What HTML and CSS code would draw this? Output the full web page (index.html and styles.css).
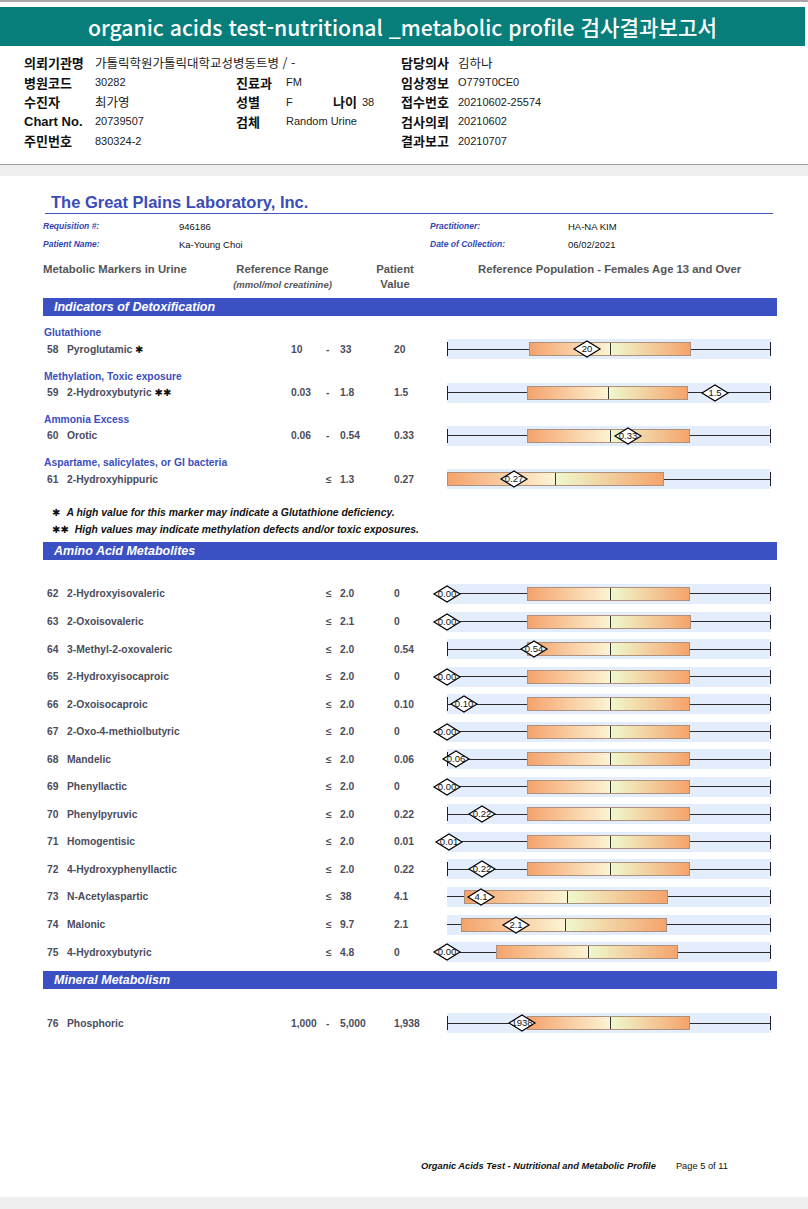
FILE: index.html
```html
<!DOCTYPE html>
<html lang="ko">
<head>
<meta charset="utf-8">
<title>organic acids test</title>
<link rel="stylesheet" href="styles.css">
</head>
<body>
<div class="top">
  <div class="hdr">organic acids test-nutritional _metabolic profile 검사결과보고서</div>
  <div class="info">
    <span class="lb">의뢰기관명</span><span class="vl k s5">가톨릭학원가톨릭대학교성병동트병 / -</span><span class="lb">담당의사</span><span class="vl k">김하나</span>
    <span class="lb">병원코드</span><span class="vl">30282</span><span class="lb">진료과</span><span class="vl s3">FM</span><span class="lb">임상정보</span><span class="vl">O779T0CE0</span>
    <span class="lb">수진자</span><span class="vl k">최가영</span><span class="lb">성별</span><span class="vl">F</span><span class="lb">나이</span><span class="vl">38</span><span class="lb">접수번호</span><span class="vl">20210602-25574</span>
    <span class="lb lat">Chart No.</span><span class="vl">20739507</span><span class="lb">검체</span><span class="vl s3">Random Urine</span><span class="lb">검사의뢰</span><span class="vl">20210602</span>
    <span class="lb">주민번호</span><span class="vl s5">830324-2</span><span class="lb">결과보고</span><span class="vl">20210707</span>
  </div>
</div>
<div class="band"></div>
<div class="page">
  <div class="title">The Great Plains Laboratory, Inc.</div>
  <div class="rule"></div>
  <div class="meta">
    <span class="ml">Requisition #:</span><span class="mv">946186</span><span class="ml">Practitioner:</span><span class="mv">HA-NA KIM</span>
    <span class="ml">Patient Name:</span><span class="mv">Ka-Young Choi</span><span class="ml">Date of Collection:</span><span class="mv">06/02/2021</span>
  </div>
  <div class="colhead">
    <span class="c1">Metabolic Markers in Urine</span>
    <span class="c2">Reference Range<br><em>(mmol/mol creatinine)</em></span>
    <span class="c3">Patient<br>Value</span>
    <span class="c4">Reference Population - Females Age 13 and Over</span>
  </div>

  <div class="sec">Indicators of Detoxification</div>

  <div class="grp">
    <div class="gl">Glutathione</div>
    <div class="row r20"><span class="n">58</span><span class="nm">Pyroglutamic <i class="ast">✱</i></span><span class="lo">10</span><span class="ds">-</span><span class="hi">33</span><span class="v">20</span>
      <div class="ch"><i class="wh"></i><i class="tk tl"></i><i class="tk tr"></i><div class="bx" style="left:82px;width:162px"><i class="ba" style="width:80px"></i><i class="bb"></i></div><span class="dm" style="left:140px"><svg viewBox="0 0 28 18"><polygon points="1,9 14,1 27,9 14,17"/></svg><b>20</b></span></div>
    </div>
  </div>
  <div class="grp">
    <div class="gl">Methylation, Toxic exposure</div>
    <div class="row r20"><span class="n">59</span><span class="nm">2-Hydroxybutyric <i class="ast">✱✱</i></span><span class="lo">0.03</span><span class="ds">-</span><span class="hi">1.8</span><span class="v">1.5</span>
      <div class="ch"><i class="wh"></i><i class="tk tl"></i><i class="tk tr"></i><div class="bx" style="left:80px;width:161px"><i class="ba" style="width:80px"></i><i class="bb"></i></div><span class="dm" style="left:268px"><svg viewBox="0 0 28 18"><polygon points="1,9 14,1 27,9 14,17"/></svg><b>1.5</b></span></div>
    </div>
  </div>
  <div class="grp">
    <div class="gl">Ammonia Excess</div>
    <div class="row r20"><span class="n">60</span><span class="nm">Orotic</span><span class="lo">0.06</span><span class="ds">-</span><span class="hi">0.54</span><span class="v">0.33</span>
      <div class="ch"><i class="wh"></i><i class="tk tl"></i><i class="tk tr"></i><div class="bx" style="left:80px;width:163px"><i class="ba" style="width:82px"></i><i class="bb"></i></div><span class="dm" style="left:181px"><svg viewBox="0 0 28 18"><polygon points="1,9 14,1 27,9 14,17"/></svg><b>0.33</b></span></div>
    </div>
  </div>
  <div class="grp">
    <div class="gl">Aspartame, salicylates, or GI bacteria</div>
    <div class="row r20"><span class="n">61</span><span class="nm">2-Hydroxyhippuric</span><span class="lo"></span><span class="ds">≤</span><span class="hi">1.3</span><span class="v">0.27</span>
      <div class="ch"><i class="wh"></i><i class="tk tr"></i><div class="bx" style="left:0px;width:217px"><i class="ba" style="width:107px"></i><i class="bb"></i></div><span class="dm" style="left:67px"><svg viewBox="0 0 28 18"><polygon points="1,9 14,1 27,9 14,17"/></svg><b>0.27</b></span></div>
    </div>
  </div>

  <div class="notes">
    <div><i class="ast">✱</i>A high value for this marker may indicate a Glutathione deficiency.</div>
    <div><i class="ast">✱✱</i>High values may indicate methylation defects and/or toxic exposures.</div>
  </div>

  <div class="sec s2">Amino Acid Metabolites</div>

  <div class="amino">
    <div class="row"><span class="n">62</span><span class="nm">2-Hydroxyisovaleric</span><span class="lo"></span><span class="ds">≤</span><span class="hi">2.0</span><span class="v">0</span>
      <div class="ch"><i class="wh"></i><i class="tk tl"></i><i class="tk tr"></i><div class="bx" style="left:80px;width:163px"><i class="ba" style="width:82px"></i><i class="bb"></i></div><span class="dm" style="left:0px"><svg viewBox="0 0 28 18"><polygon points="1,9 14,1 27,9 14,17"/></svg><b>0.00</b></span></div>
    </div>
    <div class="row"><span class="n">63</span><span class="nm">2-Oxoisovaleric</span><span class="lo"></span><span class="ds">≤</span><span class="hi">2.1</span><span class="v">0</span>
      <div class="ch"><i class="wh"></i><i class="tk tl"></i><i class="tk tr"></i><div class="bx" style="left:80px;width:164px"><i class="ba" style="width:82px"></i><i class="bb"></i></div><span class="dm" style="left:0px"><svg viewBox="0 0 28 18"><polygon points="1,9 14,1 27,9 14,17"/></svg><b>0.00</b></span></div>
    </div>
    <div class="row"><span class="n">64</span><span class="nm">3-Methyl-2-oxovaleric</span><span class="lo"></span><span class="ds">≤</span><span class="hi">2.0</span><span class="v">0.54</span>
      <div class="ch"><i class="wh"></i><i class="tk tl"></i><i class="tk tr"></i><div class="bx" style="left:80px;width:163px"><i class="ba" style="width:82px"></i><i class="bb"></i></div><span class="dm" style="left:87px"><svg viewBox="0 0 28 18"><polygon points="1,9 14,1 27,9 14,17"/></svg><b>0.54</b></span></div>
    </div>
    <div class="row"><span class="n">65</span><span class="nm">2-Hydroxyisocaproic</span><span class="lo"></span><span class="ds">≤</span><span class="hi">2.0</span><span class="v">0</span>
      <div class="ch"><i class="wh"></i><i class="tk tl"></i><i class="tk tr"></i><div class="bx" style="left:80px;width:163px"><i class="ba" style="width:82px"></i><i class="bb"></i></div><span class="dm" style="left:0px"><svg viewBox="0 0 28 18"><polygon points="1,9 14,1 27,9 14,17"/></svg><b>0.00</b></span></div>
    </div>
    <div class="row"><span class="n">66</span><span class="nm">2-Oxoisocaproic</span><span class="lo"></span><span class="ds">≤</span><span class="hi">2.0</span><span class="v">0.10</span>
      <div class="ch"><i class="wh"></i><i class="tk tl"></i><i class="tk tr"></i><div class="bx" style="left:80px;width:163px"><i class="ba" style="width:82px"></i><i class="bb"></i></div><span class="dm" style="left:17px"><svg viewBox="0 0 28 18"><polygon points="1,9 14,1 27,9 14,17"/></svg><b>0.10</b></span></div>
    </div>
    <div class="row"><span class="n">67</span><span class="nm">2-Oxo-4-methiolbutyric</span><span class="lo"></span><span class="ds">≤</span><span class="hi">2.0</span><span class="v">0</span>
      <div class="ch"><i class="wh"></i><i class="tk tl"></i><i class="tk tr"></i><div class="bx" style="left:80px;width:163px"><i class="ba" style="width:82px"></i><i class="bb"></i></div><span class="dm" style="left:0px"><svg viewBox="0 0 28 18"><polygon points="1,9 14,1 27,9 14,17"/></svg><b>0.00</b></span></div>
    </div>
    <div class="row"><span class="n">68</span><span class="nm">Mandelic</span><span class="lo"></span><span class="ds">≤</span><span class="hi">2.0</span><span class="v">0.06</span>
      <div class="ch"><i class="wh"></i><i class="tk tl"></i><i class="tk tr"></i><div class="bx" style="left:80px;width:163px"><i class="ba" style="width:82px"></i><i class="bb"></i></div><span class="dm" style="left:9px"><svg viewBox="0 0 28 18"><polygon points="1,9 14,1 27,9 14,17"/></svg><b>0.06</b></span></div>
    </div>
    <div class="row"><span class="n">69</span><span class="nm">Phenyllactic</span><span class="lo"></span><span class="ds">≤</span><span class="hi">2.0</span><span class="v">0</span>
      <div class="ch"><i class="wh"></i><i class="tk tl"></i><i class="tk tr"></i><div class="bx" style="left:80px;width:163px"><i class="ba" style="width:82px"></i><i class="bb"></i></div><span class="dm" style="left:0px"><svg viewBox="0 0 28 18"><polygon points="1,9 14,1 27,9 14,17"/></svg><b>0.00</b></span></div>
    </div>
    <div class="row"><span class="n">70</span><span class="nm">Phenylpyruvic</span><span class="lo"></span><span class="ds">≤</span><span class="hi">2.0</span><span class="v">0.22</span>
      <div class="ch"><i class="wh"></i><i class="tk tl"></i><i class="tk tr"></i><div class="bx" style="left:80px;width:163px"><i class="ba" style="width:82px"></i><i class="bb"></i></div><span class="dm" style="left:35px"><svg viewBox="0 0 28 18"><polygon points="1,9 14,1 27,9 14,17"/></svg><b>0.22</b></span></div>
    </div>
    <div class="row"><span class="n">71</span><span class="nm">Homogentisic</span><span class="lo"></span><span class="ds">≤</span><span class="hi">2.0</span><span class="v">0.01</span>
      <div class="ch"><i class="wh"></i><i class="tk tl"></i><i class="tk tr"></i><div class="bx" style="left:80px;width:163px"><i class="ba" style="width:82px"></i><i class="bb"></i></div><span class="dm" style="left:2px"><svg viewBox="0 0 28 18"><polygon points="1,9 14,1 27,9 14,17"/></svg><b>0.01</b></span></div>
    </div>
    <div class="row"><span class="n">72</span><span class="nm">4-Hydroxyphenyllactic</span><span class="lo"></span><span class="ds">≤</span><span class="hi">2.0</span><span class="v">0.22</span>
      <div class="ch"><i class="wh"></i><i class="tk tl"></i><i class="tk tr"></i><div class="bx" style="left:80px;width:163px"><i class="ba" style="width:82px"></i><i class="bb"></i></div><span class="dm" style="left:35px"><svg viewBox="0 0 28 18"><polygon points="1,9 14,1 27,9 14,17"/></svg><b>0.22</b></span></div>
    </div>
    <div class="row"><span class="n">73</span><span class="nm">N-Acetylaspartic</span><span class="lo"></span><span class="ds">≤</span><span class="hi">38</span><span class="v">4.1</span>
      <div class="ch"><i class="wh"></i><i class="tk tr"></i><div class="bx" style="left:17px;width:204px"><i class="ba" style="width:102px"></i><i class="bb"></i></div><span class="dm" style="left:34px"><svg viewBox="0 0 28 18"><polygon points="1,9 14,1 27,9 14,17"/></svg><b>4.1</b></span></div>
    </div>
    <div class="row"><span class="n">74</span><span class="nm">Malonic</span><span class="lo"></span><span class="ds">≤</span><span class="hi">9.7</span><span class="v">2.1</span>
      <div class="ch"><i class="wh"></i><i class="tk tr"></i><div class="bx" style="left:14px;width:206px"><i class="ba" style="width:103px"></i><i class="bb"></i></div><span class="dm" style="left:69px"><svg viewBox="0 0 28 18"><polygon points="1,9 14,1 27,9 14,17"/></svg><b>2.1</b></span></div>
    </div>
    <div class="row"><span class="n">75</span><span class="nm">4-Hydroxybutyric</span><span class="lo"></span><span class="ds">≤</span><span class="hi">4.8</span><span class="v">0</span>
      <div class="ch"><i class="wh"></i><i class="tk tl"></i><i class="tk tr"></i><div class="bx" style="left:49px;width:182px"><i class="ba" style="width:91px"></i><i class="bb"></i></div><span class="dm" style="left:0px"><svg viewBox="0 0 28 18"><polygon points="1,9 14,1 27,9 14,17"/></svg><b>0.00</b></span></div>
    </div>
  </div>

  <div class="sec s3">Mineral Metabolism</div>

  <div class="mineral">
    <div class="row"><span class="n">76</span><span class="nm">Phosphoric</span><span class="lo">1,000</span><span class="ds">-</span><span class="hi">5,000</span><span class="v">1,938</span>
      <div class="ch"><i class="wh"></i><i class="tk tl"></i><i class="tk tr"></i><div class="bx" style="left:80px;width:163px"><i class="ba" style="width:82px"></i><i class="bb"></i></div><span class="dm" style="left:75px"><svg viewBox="0 0 28 18"><polygon points="1,9 14,1 27,9 14,17"/></svg><b>1938</b></span></div>
    </div>
  </div>

  <div class="foot"><span class="ft">Organic Acids Test - Nutritional and Metabolic Profile</span><span class="pg">Page 5 of 11</span></div>
</div>
</body>
</html>
```

FILE: styles.css
```css
html, body {
  margin: 0;
  padding: 0;
}
body {
  background: #efefef;
  font-family: "Liberation Sans", Arial, sans-serif;
  width: 808px;
}
.top {
  background: #fff;
  border-top: 2px solid #a9a9a9;
  padding-top: 5px;
}
.hdr {
  width: 805px;
  height: 39px;
  background: #087e7a;
  color: #fff;
  text-align: center;
  font-family: "Noto Sans CJK KR", "Open Sans", sans-serif;
  font-weight: 500;
  font-size: 21.2px;
  line-height: 39px;
}
.info {
  display: grid;
  grid-template-columns: 71px 141px 50px 47px 29px 39px 57px auto;
  grid-auto-rows: 19.5px;
  align-items: center;
  padding: 7px 0 13.5px 24px;
  color: #222;
}
.lb {
  font-family: "Noto Sans CJK KR", sans-serif;
  font-weight: 700;
  font-size: 13px;
  color: #111;
  white-space: nowrap;
}
.lb.lat {
  font-family: "Liberation Sans", Arial, sans-serif;
  font-size: 13px;
}
.vl {
  font-family: "Liberation Sans", Arial, sans-serif;
  font-size: 11px;
  white-space: nowrap;
}
.vl.k {
  font-family: "Noto Sans CJK KR", sans-serif;
  font-size: 12.5px;
  font-weight: 400;
}
.s5 { grid-column: span 5; }
.s3 { grid-column: span 3; }

.band {
  border-top: 1px solid #9d9d9d;
  height: 11px;
  background: #efefef;
}

.page {
  background: #fff;
  padding: 17px 0 24px 43px;
}
.title {
  padding-left: 8px;
  font-weight: 700;
  font-size: 16.5px;
  line-height: 18px;
  color: #3a4cba;
}
.rule {
  margin: 2px 0 0 2px;
  width: 728px;
  height: 1px;
  background: #4557c0;
}
.meta {
  margin-top: 3px;
  display: grid;
  grid-template-columns: 136px 251px 138px auto;
  grid-auto-rows: 18px;
  align-items: center;
}
.ml {
  font-style: italic;
  font-weight: 700;
  font-size: 8.5px;
  color: #2f46b3;
}
.mv {
  font-size: 9.5px;
  color: #111;
}
.colhead {
  margin-top: 8.5px;
  display: grid;
  grid-template-columns: 183px 113px 112px auto;
  font-weight: 700;
  font-size: 11.3px;
  line-height: 15px;
  color: #555;
}
.colhead .c2, .colhead .c3 { text-align: center; }
.colhead em {
  font-size: 9.5px;
  font-weight: 700;
}
.colhead .c4 { padding-left: 27px; }

.sec {
  margin-top: 6.5px;
  width: 734px;
  height: 18px;
  background: #3b51c3;
  color: #fff;
  font-weight: 700;
  font-style: italic;
  font-size: 12.5px;
  line-height: 18px;
  padding-left: 11px;
  box-sizing: border-box;
}
.sec.s2 { margin-top: 4px; }
.sec.s3 { margin-top: 5px; height: 18.5px; }

.grp { padding-top: 11.3px; }
.gl {
  height: 12px;
  line-height: 12px;
  padding-left: 1px;
  font-weight: 700;
  font-size: 10.3px;
  color: #3b4fbf;
}
.row {
  display: grid;
  grid-template-columns: 24px 224px 34px 15px 54px 53px 324px;
  align-items: center;
  height: 27.55px;
  font-weight: 700;
  font-size: 10.3px;
  color: #4b4c5c;
}
.row.r20 { height: 20px; }
.row .n { padding-left: 4px; }
.row .ds { padding-left: 1px; }
.ast {
  font-style: normal;
  color: #111;
  font-size: 10px;
  font-family: "DejaVu Sans", sans-serif;
}

.ch {
  position: relative;
  width: 324px;
  height: 20px;
  background: #e4edfb;
}
.wh {
  position: absolute;
  left: 0;
  right: 1px;
  top: 9.5px;
  height: 1px;
  background: #2b2b2b;
}
.tk {
  position: absolute;
  top: 3px;
  width: 1px;
  height: 14px;
  background: #222;
}
.tl { left: 0; }
.tr { right: 0; }
.bx {
  position: absolute;
  top: 3px;
  height: 14px;
  box-sizing: border-box;
  border: 1px solid #ae917d;
  display: flex;
}
.ba {
  height: 100%;
  background: linear-gradient(90deg, #f5a36c, #fcf4d4);
}
.bb {
  flex: 1;
  height: 100%;
  border-left: 1px solid #333;
  background: linear-gradient(90deg, #eff8cd, #f5a36c);
}
.dm {
  position: absolute;
  top: 1px;
  width: 28px;
  height: 18px;
  margin-left: -14px;
}
.dm svg {
  position: absolute;
  left: 0;
  top: 0;
  width: 28px;
  height: 18px;
  overflow: visible;
}
.dm polygon {
  fill: #fff;
  stroke: #000;
  stroke-width: 1.2;
}
.dm b {
  position: relative;
  display: block;
  text-align: center;
  font-weight: 400;
  font-size: 9.5px;
  line-height: 18px;
  color: #111;
  white-space: nowrap;
}

.notes {
  margin-top: 15px;
  padding-left: 9px;
  font-weight: 700;
  font-style: italic;
  font-size: 10.4px;
  line-height: 17px;
  color: #111;
}
.notes .ast { margin-right: 6px; }

.amino { margin-top: 20px; }
.mineral { margin-top: 20px; }

.foot {
  margin-top: 123px;
  padding-left: 378px;
  display: flex;
  gap: 20px;
  line-height: 13px;
  font-size: 9.3px;
  color: #111;
}
.foot .ft {
  font-weight: 700;
  font-style: italic;
}
```
